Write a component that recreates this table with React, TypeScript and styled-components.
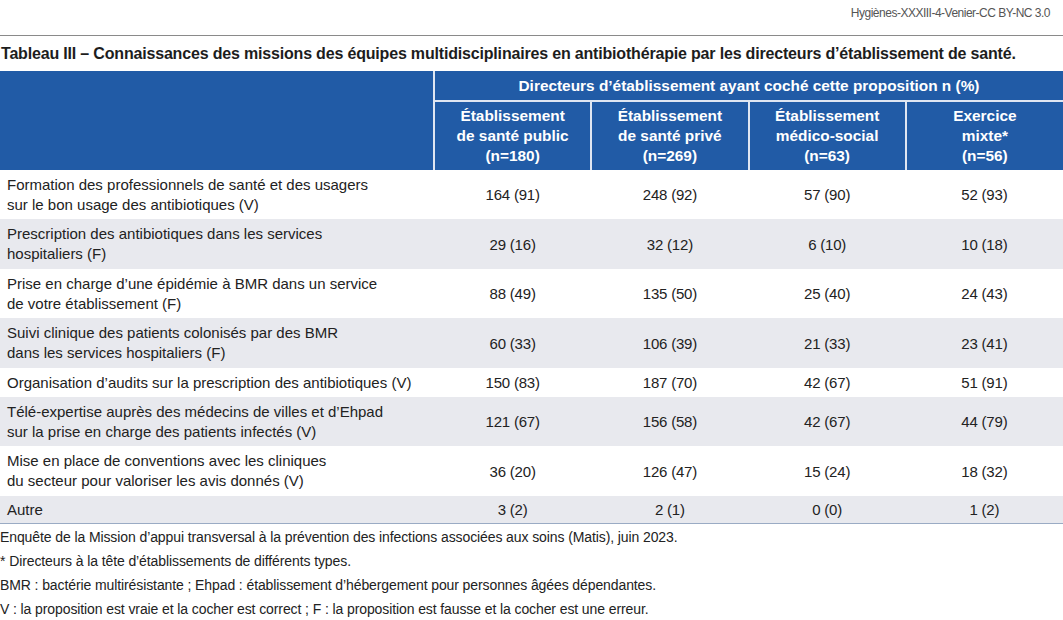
import React from "react";
import styled, { createGlobalStyle } from "styled-components";

const GlobalStyle = createGlobalStyle`
  html, body { margin: 0; padding: 0; background: #ffffff; }
  body { font-family: "Liberation Sans", Arial, sans-serif; color: #222; }
`;

const Page = styled.div`
  width: 1063px;
  height: 620px;
  overflow: hidden;
  background: #fff;
`;

const TopBar = styled.div`
  height: 36px;
  border-bottom: 1.5px solid #8a8a8a;
  display: flex;
  justify-content: flex-end;
  align-items: flex-start;
  padding: 6px 13px 0 0;
  box-sizing: border-box;
  font-size: 12px;
  color: #555;
  letter-spacing: -0.5px;
`;

const Title = styled.div`
  height: 35px;
  display: flex;
  align-items: center;
  padding-left: 1px;
  font-size: 16px;
  font-weight: 700;
  color: #1d1d1d;
  letter-spacing: -0.18px;
  white-space: nowrap;
`;

const Table = styled.table`
  width: 1063px;
  border-collapse: collapse;
  table-layout: fixed;
  border-bottom: 1.5px solid #9aabc4;
`;

const HeadCell = styled.th<{ $first?: boolean }>`
  background: #215ba6;
  color: #fff;
  font-weight: 700;
  font-size: 15.4px;
  line-height: 20px;
  text-align: center;
  padding: 0;
  border-left: ${(p) => (p.$first ? "none" : "2px solid #dfe6f2")};
  letter-spacing: 0;
`;

const SpanHead = styled(HeadCell)`
  height: 29px;
  border-bottom: 2px solid #dfe6f2;
`;

const SubHead = styled(HeadCell)`
  height: 68px;
  vertical-align: middle;
`;

const Row = styled.tr<{ $shade: boolean }>`
  background: ${(p) => (p.$shade ? "#e8e9ee" : "#ffffff")};
`;

const LabelCell = styled.td<{ $h: number }>`
  height: ${(p) => p.$h}px;
  padding: 0 0 0 7px;
  font-size: 15px;
  line-height: 20px;
  color: #222;
  vertical-align: middle;
  letter-spacing: 0;
`;

const ValueCell = styled.td`
  text-align: center;
  font-size: 15px;
  color: #222;
  vertical-align: middle;
  padding: 0;
  letter-spacing: -0.2px;
`;

const Notes = styled.div`
  padding-top: 1px;
  font-size: 14px;
  line-height: 24px;
  color: #222;
  letter-spacing: -0.1px;
  white-space: nowrap;
`;

type R = { label: React.ReactNode; values: string[]; h: number };

const rows: R[] = [
  {
    label: (
      <>
        Formation des professionnels de santé et des usagers
        <br />
        sur le bon usage des antibiotiques (V)
      </>
    ),
    values: ["164 (91)", "248 (92)", "57 (90)", "52 (93)"],
    h: 49,
  },
  {
    label: (
      <>
        Prescription des antibiotiques dans les services
        <br />
        hospitaliers (F)
      </>
    ),
    values: ["29 (16)", "32 (12)", "6 (10)", "10 (18)"],
    h: 50,
  },
  {
    label: (
      <>
        Prise en charge d’une épidémie à BMR dans un service
        <br />
        de votre établissement (F)
      </>
    ),
    values: ["88 (49)", "135 (50)", "25 (40)", "24 (43)"],
    h: 49,
  },
  {
    label: (
      <>
        Suivi clinique des patients colonisés par des BMR
        <br />
        dans les services hospitaliers (F)
      </>
    ),
    values: ["60 (33)", "106 (39)", "21 (33)", "23 (41)"],
    h: 50,
  },
  {
    label: <>Organisation d’audits sur la prescription des antibiotiques (V)</>,
    values: ["150 (83)", "187 (70)", "42 (67)", "51 (91)"],
    h: 29,
  },
  {
    label: (
      <>
        Télé-expertise auprès des médecins de villes et d’Ehpad
        <br />
        sur la prise en charge des patients infectés (V)
      </>
    ),
    values: ["121 (67)", "156 (58)", "42 (67)", "44 (79)"],
    h: 49,
  },
  {
    label: (
      <>
        Mise en place de conventions avec les cliniques
        <br />
        du secteur pour valoriser les avis donnés (V)
      </>
    ),
    values: ["36 (20)", "126 (47)", "15 (24)", "18 (32)"],
    h: 50,
  },
  {
    label: <>Autre</>,
    values: ["3 (2)", "2 (1)", "0 (0)", "1 (2)"],
    h: 27,
  },
];

export default function App() {
  return (
    <Page>
      <GlobalStyle />
      <TopBar>Hygiènes-XXXIII-4-Venier-CC BY-NC 3.0</TopBar>
      <Title>
        Tableau III – Connaissances des missions des équipes multidisciplinaires en antibiothérapie par les
        directeurs d’établissement de santé.
      </Title>
      <Table>
        <colgroup>
          <col style={{ width: 434 }} />
          <col />
          <col />
          <col />
          <col />
        </colgroup>
        <thead>
          <tr>
            <HeadCell $first rowSpan={2} />
            <SpanHead colSpan={4}>
              Directeurs d’établissement ayant coché cette proposition n (%)
            </SpanHead>
          </tr>
          <tr>
            <SubHead>
              Établissement
              <br />
              de santé public
              <br />
              (n=180)
            </SubHead>
            <SubHead>
              Établissement
              <br />
              de santé privé
              <br />
              (n=269)
            </SubHead>
            <SubHead>
              Établissement
              <br />
              médico-social
              <br />
              (n=63)
            </SubHead>
            <SubHead>
              Exercice
              <br />
              mixte*
              <br />
              (n=56)
            </SubHead>
          </tr>
        </thead>
        <tbody>
          {rows.map((r, i) => (
            <Row key={i} $shade={i % 2 === 1}>
              <LabelCell $h={r.h}>{r.label}</LabelCell>
              {r.values.map((v, j) => (
                <ValueCell key={j}>{v}</ValueCell>
              ))}
            </Row>
          ))}
        </tbody>
      </Table>
      <Notes>
        Enquête de la Mission d’appui transversal à la prévention des infections associées aux soins (Matis), juin
        2023.
        <br />* Directeurs à la tête d’établissements de différents types.
        <br />
        BMR : bactérie multirésistante ; Ehpad : établissement d’hébergement pour personnes âgées dépendantes.
        <br />
        V : la proposition est vraie et la cocher est correct ; F : la proposition est fausse et la cocher est une
        erreur.
      </Notes>
    </Page>
  );
}
